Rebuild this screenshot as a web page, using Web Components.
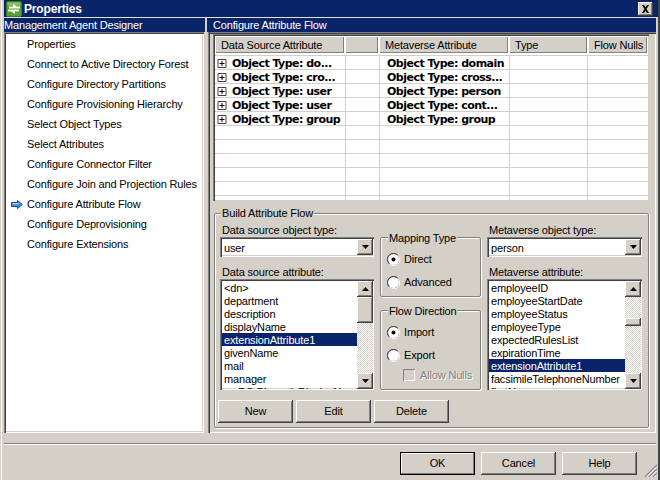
<!DOCTYPE html>
<html>
<head>
<meta charset="utf-8">
<title>Properties</title>
<style>
  html, body { margin: 0; padding: 0; background: #d4d0c8; overflow: hidden; }
  body { font: 11px "Liberation Sans", Arial, sans-serif; letter-spacing: -0.16px; color: #000; }
</style>
<script>
// small helper, every element is just a shadow root with some markup
function el(name, css, html, onRender) {
  customElements.define(name, class extends HTMLElement {
    connectedCallback() {
      if (this.shadowRoot) return;
      const root = this.attachShadow({ mode: "open" });
      const body = typeof html === "function" ? html(this) : html;
      root.innerHTML = `<style>${css}</style>${body}`;
      if (onRender) onRender(this, root);
    }
  });
}

const SUNKEN = "box-shadow: inset 1px 1px 0 #808080, inset 2px 2px 0 #404040, inset -1px -1px 0 #fff, inset -2px -2px 0 #d4d0c8;";
const RAISED = "box-shadow: inset -1px -1px 0 #404040, inset 1px 1px 0 #fff, inset -2px -2px 0 #808080;";
const ARROW_DOWN = `<svg width="7" height="4" viewBox="0 0 7 4"><path d="M0 0h7L3.5 4z" fill="#000"/></svg>`;
const ARROW_UP = `<svg width="7" height="4" viewBox="0 0 7 4"><path d="M0 4h7L3.5 0z" fill="#000"/></svg>`;

el("ma-dialog", `
  :host { display: block; position: relative; width: 660px; height: 480px; box-sizing: border-box; overflow: hidden;
    background: #d4d0c8; box-shadow: inset 1px 0 0 #d4d0c8, inset 2px 0 0 #fff, inset -2px 0 0 #404040; }
  .main { display: grid; grid-template-columns: 201px 449px; column-gap: 2px; height: 415px; margin-left: 4px; }
  .sep { height: 1px; margin: 10px 4px 0 4px; background: #808080; box-shadow: 0 1px 0 #fff; }
  .foot { display: flex; justify-content: flex-end; gap: 6px; padding: 8px 23px 0 0; }
  .grip { position: absolute; right: 3px; bottom: 3px; display: block; }
`, `
  <slot name="title"></slot>
  <div class="main"><slot name="left"></slot><slot name="right"></slot></div>
  <div class="sep"></div>
  <div class="foot"><slot name="foot"></slot></div>
  <svg class="grip" width="14" height="13" viewBox="0 0 14 13">
    <path d="M2 13L14 1M6 13l8-8M10 13l4-4" stroke="#808080" stroke-width="1.3" fill="none"/>
    <path d="M3.5 13L14 2.5M7.500 13L14 6.500M11.500 13L14 10.500" stroke="#fff" stroke-width="1" fill="none"/>
  </svg>
`);

el("ma-titlebar", `
  :host { display: flex; align-items: center; height: 17px; margin: 0 2px 0 4px; background: #0a246a; color: #fff;
    font: bold 12px "Liberation Sans", Arial, sans-serif; box-shadow: 0 1px 0 #e4e2dc; margin-bottom: 1px; }
  svg.icon { margin: 0 2px 0 2px; flex: none; }
  span { flex: 1; }
  .close { width: 15px; height: 14px; margin-right: 5px; box-sizing: border-box; background: #d4d0c8; ${RAISED}
    display: flex; align-items: center; justify-content: center; }
`, `
  <svg class="icon" width="16" height="16" viewBox="0 0 16 16">
    <rect x="0.500" y="0.500" width="15" height="15" rx="1.500" fill="#5a9e34" stroke="#3c7a22"/>
    <rect x="1.500" y="1.500" width="13" height="3" fill="#8cc060"/>
    <path d="M7 3L11 5.500H14V7.500H3V5.500H7z" fill="#fff"/>
    <path d="M9 13L5 10.500H2V8.500H13V10.500H9z" fill="#e8f4dc"/>
  </svg>
  <span><slot></slot></span>
  <div class="close"><svg width="9" height="8" viewBox="0 0 9 8"><path d="M1 0h2l1.500 2.200L6 0h2L5.500 4 8 8H6L4.500 5.800 3 8H1l2.500-4z" fill="#000"/></svg></div>
`);

el("ma-pane", `
  :host { display: flex; flex-direction: column; min-width: 0; }
  .head { height: 14px; line-height: 14px; background: #0a246a; color: #fff; padding-left: var(--head-pad, 0); white-space: nowrap; }
  .body { flex: 1; min-height: 0; box-sizing: border-box; }
`, `
  <div class="head"><slot name="head"></slot></div>
  <div class="body" part="body"><slot></slot></div>
`);

el("ma-nav", `
  :host { display: block; height: 100%; box-sizing: border-box; margin-right: 1px; padding: 2px 0 0 2px; background: #fff; ${SUNKEN} }
`, `<slot></slot>`);

el("ma-nav-item", `
  :host { display: flex; align-items: center; height: 20px; white-space: nowrap; }
  .mark { width: 21px; flex: none; display: flex; justify-content: flex-end; padding-right: 4px; box-sizing: border-box; }
`, (h) => `
  <div class="mark">${h.hasAttribute("current") ? `<svg width="12" height="9" viewBox="0 0 12 9"><path d="M.5 2.500h6v-2L11.300 4.500 6.500 8.500v-2h-6z" fill="#3f96ea" stroke="#1c3f9c"/><path d="M1.500 3.500h6" stroke="#bfe0ff"/></svg>` : ""}</div>
  <slot></slot>
`);

el("ma-flow-panel", `
  :host { display: block; height: 100%; box-sizing: border-box; padding: 2px 7px 0 6px; ${"box-shadow: inset 1px 0 0 #d4d0c8, inset 2px 0 0 #808080, inset 3px 0 0 #404040, inset 0 1px 0 #808080, inset 0 2px 0 #404040, inset -1px -1px 0 #fff;"} }
`, `<slot></slot>`);

el("ma-table", `
  :host { display: block; height: 167px; box-sizing: border-box; padding: 2px 1px 0 2px; overflow: hidden; background: #fff;
    box-shadow: inset 1px 1px 0 #808080, inset 2px 2px 0 #404040, inset -1px -1px 0 #d4d0c8; }
  .head { display: grid; grid-template-columns: 130px 34px 130px 79px 60px; height: 17px; }
  .line { height: 1px; margin-top: 2px; background: #d4d0c8; }
`, `
  <div class="head"><slot name="head"></slot></div>
  <div class="line"></div>
  <slot></slot>
`);

el("ma-th", `
  :host { display: block; box-sizing: border-box; height: 17px; line-height: 18px; padding-left: 6px; background: #d4d0c8; white-space: nowrap;
    box-shadow: inset 1px 1px 0 #fff, inset -1px -1px 0 #808080; margin-right: 1px; }
`, `<slot></slot>`);

el("ma-tr", `
  :host { display: grid; grid-template-columns: 131px 34px 130px 78px 60px; height: 14px; box-sizing: border-box; border-bottom: 1px solid #d4d0c8; }
  .c { border-right: 1px solid #d4d0c8; box-sizing: border-box; display: flex; align-items: center; white-space: nowrap; overflow: hidden;
    font: bold 11px "DejaVu Sans", sans-serif; letter-spacing: -0.52px; height: 13px; padding-top: 2px; }
  .c:last-child { border-right: 0; }
  svg { margin: 0 5px 0 2px; flex: none; }
  .pad { padding-left: 7px; }
`, (h) => {
  const a = h.getAttribute("a");
  const b = h.getAttribute("b");
  const plus = `<svg width="10" height="9" viewBox="0 0 9 9"><path d="M.5.5h8v8h-8z" fill="#fff" stroke="#404040"/><path d="M2 4.500h5M4.500 2v5" stroke="#000"/></svg>`;
  return `<div class="c">${a ? plus + a : ""}</div><div class="c"></div><div class="c pad">${b || ""}</div><div class="c"></div><div class="c"></div>`;
});

el("ma-group", `
  :host { display: block; }
  fieldset { margin: 0; min-width: 0; height: var(--h, auto); box-sizing: border-box; border: 1px solid #808080; border-radius: 2px;
    padding: var(--pad, 0); box-shadow: 1px 1px 0 #fff, inset 1px 1px 0 #fff; }
  legend { padding: 0 1px; margin-left: var(--lg, 6px); height: 13px; line-height: var(--lh, 13px); background: #d4d0c8; }
`, (h) => `<fieldset><legend>${h.getAttribute("label")}</legend><slot></slot></fieldset>`);

el("ma-build", `
  :host { display: grid; grid-template-columns: 154px 101px 155px; column-gap: 6px; }
  .col { display: flex; flex-direction: column; }
  .mid { padding-top: 7px; gap: 7px; }
  .acts { grid-column: 1 / -1; display: flex; gap: 3px; margin: 10px 0 0 -2px; }
`, `
  <div class="col"><slot name="a"></slot></div>
  <div class="col mid"><slot name="b"></slot></div>
  <div class="col"><slot name="c"></slot></div>
  <div class="acts"><slot name="acts"></slot></div>
`);

el("ma-field", `
  :host { display: block; }
  .l { height: 13px; line-height: 13px; padding-left: 2px; white-space: nowrap; }
`, (h) => `<div class="l">${h.getAttribute("label")}</div><slot></slot>`);

el("ma-combo", `
  :host { display: flex; height: 20px; box-sizing: border-box; padding: 2px 1px 2px 2px; margin-bottom: 9px; background: #fff; ${SUNKEN} }
  .v { flex: 1; line-height: 18px; padding-left: 2px; }
  .b { width: 16px; height: 16px; background: #d4d0c8; ${RAISED} display: flex; align-items: center; justify-content: center; }
`, (h) => `<div class="v">${h.getAttribute("value")}</div><div class="b">${ARROW_DOWN}</div>`);

el("ma-list", `
  :host { display: flex; height: 111px; box-sizing: border-box; padding: 2px 1px 1px 2px; background: #fff; ${SUNKEN} }
  .items { flex: 1; min-width: 0; overflow: hidden; }
  .bar { width: 16px; flex: none; display: flex; flex-direction: column;
    background: conic-gradient(#fff 25%, #d4d0c8 0 50%, #fff 0 75%, #d4d0c8 0) 0 0 / 2px 2px; }
  .btn, .thumb { background: #d4d0c8; ${RAISED} box-sizing: border-box; }
  .btn { height: 16px; flex: none; display: flex; align-items: center; justify-content: center; }
  .track { flex: 1; }
  .thumb { height: var(--tt, 26px); margin-top: var(--tm, 0); }
`, `
  <div class="items"><slot></slot></div>
  <div class="bar"><div class="btn">${ARROW_UP}</div><div class="track"><div class="thumb"></div></div><div class="btn">${ARROW_DOWN}</div></div>
`);

el("ma-opt", `
  :host { display: block; height: 13px; line-height: 15px; padding-left: 2px; white-space: nowrap; overflow: hidden; }
  :host([selected]) { background: #0a246a; color: #fff; }
`, `<slot></slot>`);

el("ma-radio", `
  :host { display: flex; align-items: center; height: 16px; gap: 4px; white-space: nowrap; }
  svg { flex: none; }
`, (h) => `
  <svg width="13" height="13" viewBox="0 0 13 13">
    <circle cx="6.500" cy="6.500" r="6" fill="#fff" stroke="#808080"/>
    <path d="M2.200 10.800A6 6 0 0 1 10.800 2.200" fill="none" stroke="#404040"/>
    <path d="M2.500 11A6 6 0 0 0 11 2.500" fill="none" stroke="#fff"/>
    ${h.hasAttribute("checked") ? `<circle cx="6.500" cy="6.500" r="2" fill="#000"/>` : ""}
  </svg><slot></slot>
`);

el("ma-check", `
  :host { display: flex; align-items: center; height: 14px; gap: 5px; margin: 5px 0 0 16px; white-space: nowrap;
    color: #808080; text-shadow: 1px 1px 0 #fff; }
  .box { width: 12px; height: 12px; box-sizing: border-box; flex: none;
    box-shadow: inset 1px 1px 0 #808080, inset -1px -1px 0 #fff; }
`, `<div class="box"></div><slot></slot>`);

el("ma-btn", `
  :host { display: flex; align-items: center; justify-content: center; width: 75px; height: 23px; box-sizing: border-box; padding-bottom: 2px; background: #d4d0c8; ${RAISED} }
  :host([default]) { box-shadow: inset 0 0 0 1px #000, inset -2px -2px 0 #808080, inset 2px 2px 0 #fff; }
`, `<slot></slot>`);
</script>
</head>
<body>
<ma-dialog>
  <ma-titlebar slot="title">Properties</ma-titlebar>

  <ma-pane slot="left">
    <span slot="head">Management Agent Designer</span>
    <ma-nav>
      <ma-nav-item>Properties</ma-nav-item>
      <ma-nav-item>Connect to Active Directory Forest</ma-nav-item>
      <ma-nav-item>Configure Directory Partitions</ma-nav-item>
      <ma-nav-item>Configure Provisioning Hierarchy</ma-nav-item>
      <ma-nav-item>Select Object Types</ma-nav-item>
      <ma-nav-item>Select Attributes</ma-nav-item>
      <ma-nav-item>Configure Connector Filter</ma-nav-item>
      <ma-nav-item>Configure Join and Projection Rules</ma-nav-item>
      <ma-nav-item current>Configure Attribute Flow</ma-nav-item>
      <ma-nav-item>Configure Deprovisioning</ma-nav-item>
      <ma-nav-item>Configure Extensions</ma-nav-item>
    </ma-nav>
  </ma-pane>

  <ma-pane slot="right" style="--head-pad:6px">
    <span slot="head">Configure Attribute Flow</span>
    <ma-flow-panel>
      <ma-table>
        <ma-th slot="head">Data Source Attribute</ma-th>
        <ma-th slot="head"></ma-th>
        <ma-th slot="head">Metaverse Attribute</ma-th>
        <ma-th slot="head">Type</ma-th>
        <ma-th slot="head">Flow Nulls</ma-th>
        <ma-tr a="Object Type: do..." b="Object Type: domain"></ma-tr>
        <ma-tr a="Object Type: cro..." b="Object Type: cross..."></ma-tr>
        <ma-tr a="Object Type: user" b="Object Type: person"></ma-tr>
        <ma-tr a="Object Type: user" b="Object Type: cont..."></ma-tr>
        <ma-tr a="Object Type: group" b="Object Type: group"></ma-tr>
        <ma-tr></ma-tr><ma-tr></ma-tr><ma-tr></ma-tr><ma-tr></ma-tr><ma-tr></ma-tr><ma-tr></ma-tr>
      </ma-table>

      <ma-group label="Build Attribute Flow" style="--pad:4px 6px 0 5px;--h:221px;--lg:1px;margin:6px 0 0 1px">
        <ma-build>
          <ma-field slot="a" label="Data source object type:"><ma-combo value="user"></ma-combo></ma-field>
          <ma-field slot="a" label="Data source attribute:">
            <ma-list>
              <ma-opt>&lt;dn&gt;</ma-opt>
              <ma-opt>department</ma-opt>
              <ma-opt>description</ma-opt>
              <ma-opt>displayName</ma-opt>
              <ma-opt selected>extensionAttribute1</ma-opt>
              <ma-opt>givenName</ma-opt>
              <ma-opt>mail</ma-opt>
              <ma-opt>manager</ma-opt>
              <ma-opt>msDS-PhoneticDisplayName</ma-opt>
            </ma-list>
          </ma-field>

          <ma-group slot="b" label="Mapping Type" style="--pad:7px 6px 0 6px;--h:66px;--lg:1px;--lh:15px">
            <ma-radio checked style="margin-bottom:7px">Direct</ma-radio>
            <ma-radio>Advanced</ma-radio>
          </ma-group>
          <ma-group slot="b" label="Flow Direction" style="--pad:7px 6px 0 6px;--h:86px;--lg:1px;--lh:15px">
            <ma-radio checked style="margin-bottom:7px">Import</ma-radio>
            <ma-radio>Export</ma-radio>
            <ma-check>Allow Nulls</ma-check>
          </ma-group>

          <ma-field slot="c" label="Metaverse object type:"><ma-combo value="person"></ma-combo></ma-field>
          <ma-field slot="c" label="Metaverse attribute:">
            <ma-list style="--tt:8px;--tm:21px">
              <ma-opt>employeeID</ma-opt>
              <ma-opt>employeeStartDate</ma-opt>
              <ma-opt>employeeStatus</ma-opt>
              <ma-opt>employeeType</ma-opt>
              <ma-opt>expectedRulesList</ma-opt>
              <ma-opt>expirationTime</ma-opt>
              <ma-opt selected>extensionAttribute1</ma-opt>
              <ma-opt>facsimileTelephoneNumber</ma-opt>
              <ma-opt>firstName</ma-opt>
            </ma-list>
          </ma-field>

          <ma-btn slot="acts">New</ma-btn>
          <ma-btn slot="acts">Edit</ma-btn>
          <ma-btn slot="acts">Delete</ma-btn>
        </ma-build>
      </ma-group>
    </ma-flow-panel>
  </ma-pane>

  <ma-btn slot="foot" default>OK</ma-btn>
  <ma-btn slot="foot">Cancel</ma-btn>
  <ma-btn slot="foot">Help</ma-btn>
</ma-dialog>
</body>
</html>
